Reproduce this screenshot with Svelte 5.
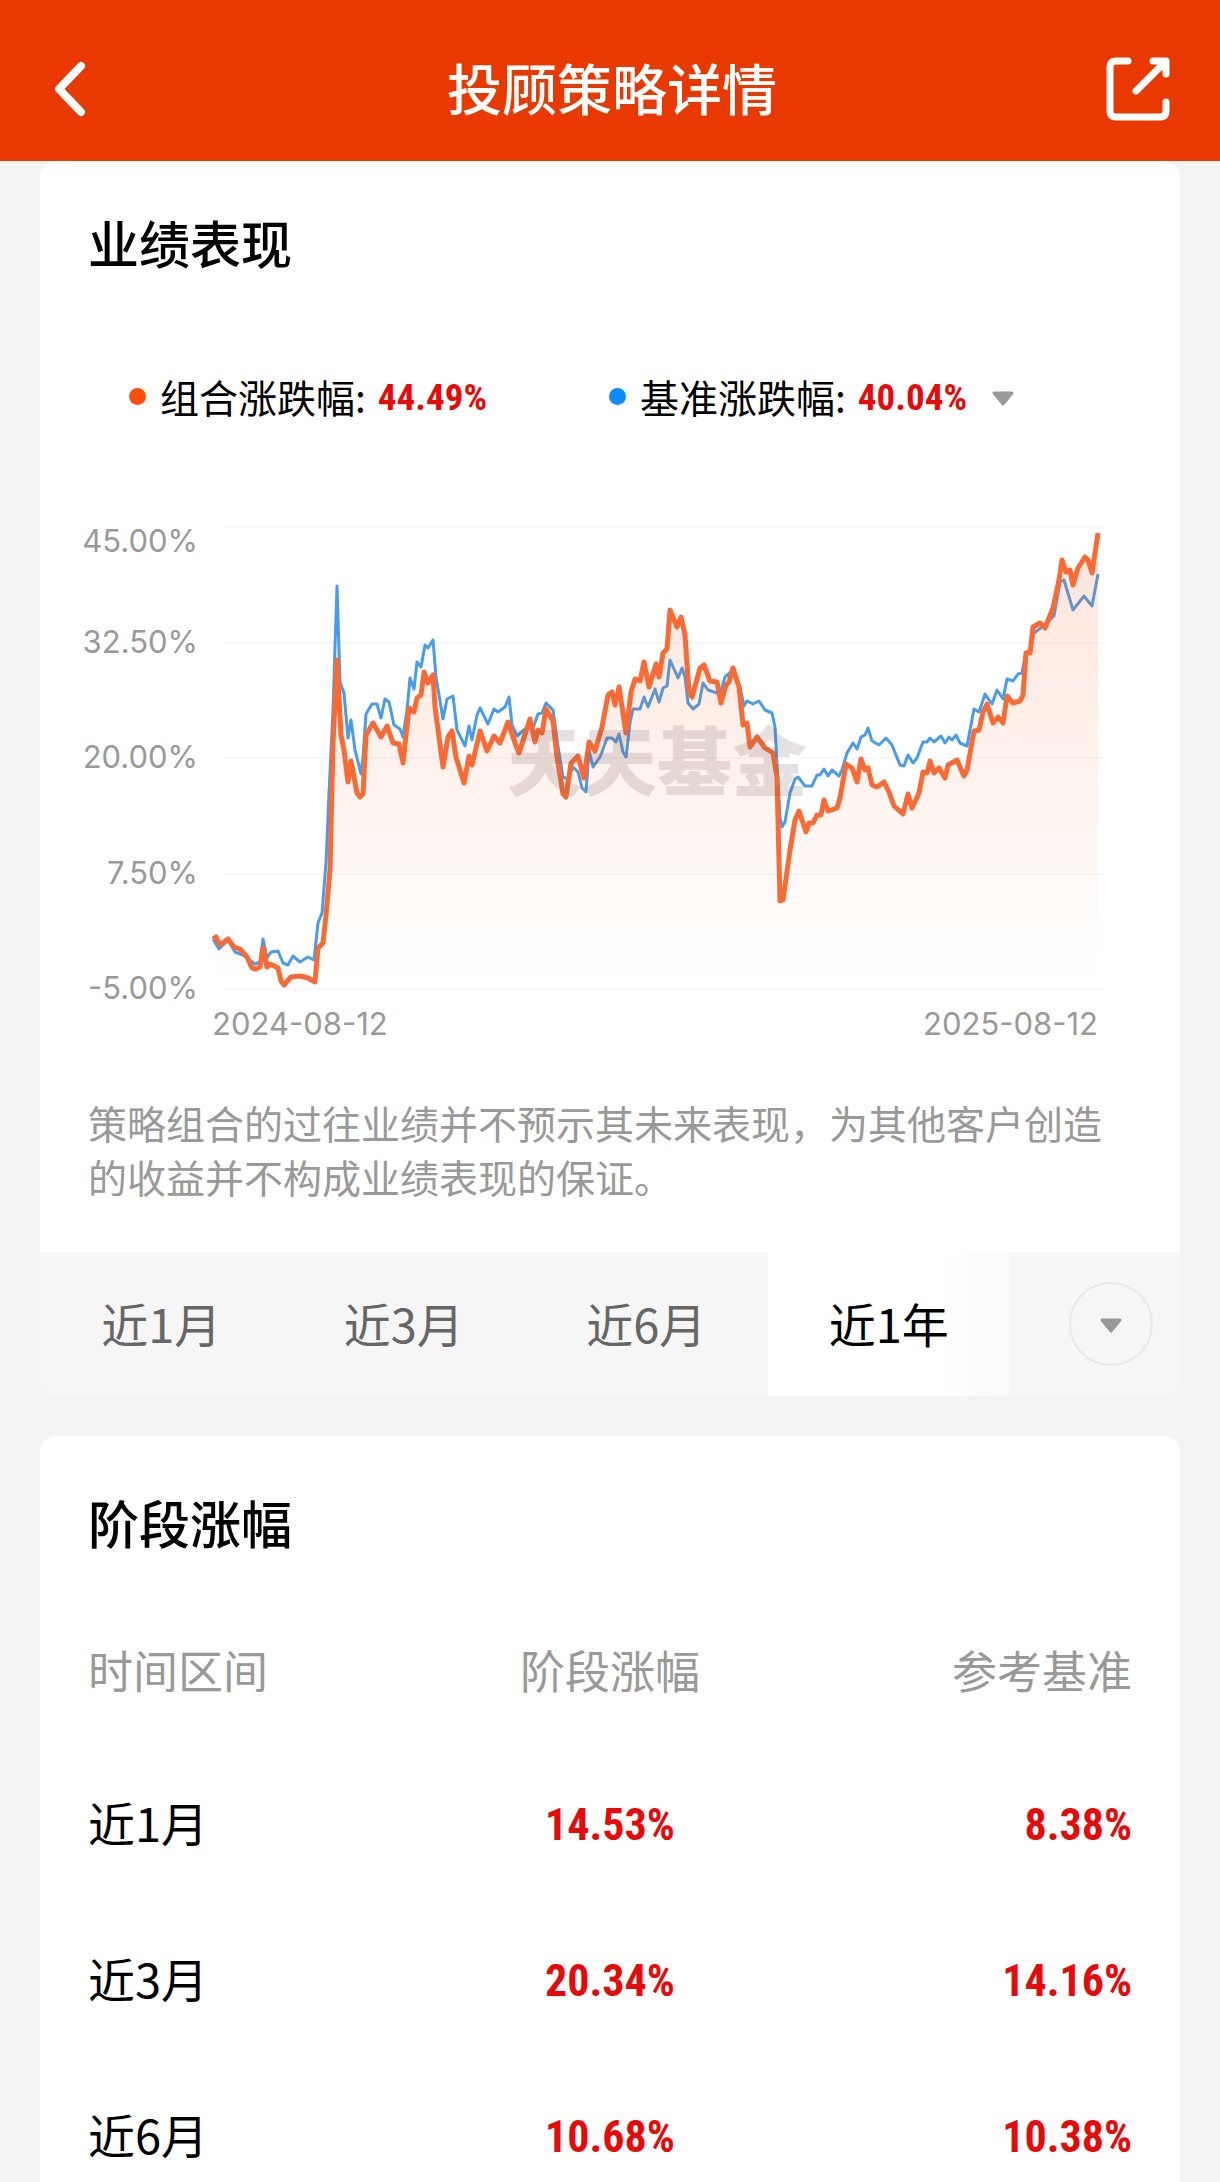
<script lang="ts">
    type Period = { label: string; gain: string; benchmark: string };

    const ticks = ["45.00%", "32.50%", "20.00%", "7.50%", "-5.00%"];
    const gridLines = [527, 643, 758, 874, 989];
    const tabs = ["近1月", "近3月", "近6月", "近1年"];
    const periods: Period[] = [
        { label: "近1月", gain: "14.53%", benchmark: "8.38%" },
        { label: "近3月", gain: "20.34%", benchmark: "14.16%" },
        { label: "近6月", gain: "10.68%", benchmark: "10.38%" },
    ];

    let activeTab = $state("近1年");

    const portfolio =
        "213,939 216,937 220,945 228,939 234,947 240,949 247,957 252,968 256,969 260,967 263,948 267,967 270,964 278,968 281,981 284,985 291,977 300,976 308,978 315,982 318,948 323,943 326,915 330,870 333,743 337,660 341,735 344,750 348,782 351,761 357,793 360,797 363,794 366,735 373,723 381,737 387,726 393,743 399,744 403,763 409,708 414,712 417,698 421,695 424,672 428,683 433,675 435,707 443,767 448,737 452,731 456,757 464,783 469,756 472,765 480,731 487,751 494,736 500,743 508,722 515,743 519,753 530,719 535,742 538,730 542,733 546,709 553,721 557,757 563,794 566,797 571,763 578,756 584,778 589,742 595,751 602,727 608,695 612,692 615,705 619,687 626,733 631,692 635,679 640,681 644,662 649,687 656,664 659,677 663,653 667,649 670,610 677,627 681,617 685,635 689,692 692,697 700,668 704,665 710,681 717,682 721,703 726,685 729,682 733,668 739,687 743,725 747,723 750,747 757,737 765,748 773,753 777,777 778,820 780,901 783,900 790,850 795,820 799,811 806,832 809,823 813,823 817,815 821,815 824,800 828,811 837,808 840,798 846,764 852,768 857,782 861,759 865,770 868,768 872,785 877,787 884,782 889,792 894,806 903,814 908,794 912,808 919,793 923,772 927,773 930,761 934,773 939,768 945,778 948,765 957,760 964,776 967,770 974,731 979,730 983,712 987,704 993,723 998,717 1003,723 1007,696 1013,703 1020,701 1023,695 1026,653 1030,653 1033,627 1040,623 1045,628 1053,608 1059,580 1062,560 1066,572 1070,570 1073,585 1078,568 1085,557 1088,560 1092,573 1098,533";
    const benchmark =
        "213,939 219,949 228,940 235,952 243,955 255,964 260,962 263,939 267,958 271,952 278,951 283,963 288,965 293,956 300,962 308,957 314,960 318,923 322,913 326,863 329,793 333,710 337,586 340,682 344,693 348,738 351,720 355,750 361,774 363,757 366,714 372,704 377,704 381,718 385,699 389,702 394,725 400,729 403,737 407,710 410,678 414,689 417,662 421,667 425,645 428,648 433,640 436,677 443,719 447,699 453,696 457,730 465,746 469,726 472,740 477,715 480,708 488,724 494,709 498,712 505,707 509,697 512,725 517,736 525,729 533,728 538,714 542,713 546,703 553,710 557,740 563,777 568,779 573,767 578,772 582,788 586,792 589,750 593,767 600,757 607,738 612,738 616,742 619,734 623,752 626,757 630,723 633,709 640,709 644,697 648,707 655,689 659,702 663,688 667,686 670,660 678,678 682,668 685,677 688,703 693,709 699,704 703,683 708,690 720,694 725,677 733,670 740,687 744,706 747,701 753,704 759,701 765,710 772,713 775,727 777,763 780,817 782,827 785,822 790,793 795,779 798,777 805,786 812,786 817,775 820,775 824,769 828,776 832,770 839,776 842,770 847,753 853,743 857,749 861,737 865,735 868,728 872,741 879,745 886,738 892,745 900,765 904,766 908,755 913,763 917,758 923,742 927,742 930,738 934,742 941,736 945,743 949,737 952,740 956,735 960,743 967,746 970,730 974,709 979,712 985,694 992,704 997,690 1003,699 1007,679 1013,681 1018,674 1022,673 1026,652 1030,652 1034,633 1042,627 1054,616 1060,582 1064,580 1073,610 1084,596 1092,606 1098,574";
</script>

<div class="page">
    <header class="topbar">
        <button class="icon-button" aria-label="返回">
            <svg width="32" height="60" viewBox="0 0 32 60">
                <path d="M27 7 L5 30 L27 53" />
            </svg>
        </button>
        <h1>投顾策略详情</h1>
        <button class="icon-button" aria-label="分享">
            <svg class="share" width="64" height="64" viewBox="0 0 64 64">
                <path d="M22 4 H10 Q4 4 4 10 V54 Q4 60 10 60 H54 Q60 60 60 54 V45" />
                <path d="M47 4 H60 V17 M59 5 L30 34" />
            </svg>
        </button>
    </header>

    <main>
        <section class="card performance">
            <h2>业绩表现</h2>
            <div class="legend">
                <div class="legend-item">
                    <span class="dot"></span>
                    <span>组合涨跌幅:</span>
                    <span class="value">44.49%</span>
                </div>
                <button class="legend-item">
                    <span class="dot blue"></span>
                    <span>基准涨跌幅:</span>
                    <span class="value">40.04%</span>
                    <svg class="caret" width="24" height="16" viewBox="0 0 24 16">
                        <path d="M3 2 H21 L12 13 Z" />
                    </svg>
                </button>
            </div>

            <div class="chart">
                <div class="ticks">
                    {#each ticks as tick}
                        <span>{tick}</span>
                    {/each}
                </div>
                <div class="plot">
                    <svg viewBox="212 520 908 475" preserveAspectRatio="none">
                        <defs>
                            <linearGradient id="area" x1="0" y1="0" x2="0" y2="1">
                                <stop offset="0" stop-color="#ff6a33" stop-opacity="0.18" />
                                <stop offset="0.6" stop-color="#ff6a33" stop-opacity="0.07" />
                                <stop offset="1" stop-color="#ff9a33" stop-opacity="0" />
                            </linearGradient>
                        </defs>
                        {#each gridLines as y}
                            <line x1="223" x2="1105" y1={y} y2={y} />
                        {/each}
                        <polyline class="benchmark" points={benchmark} />
                        <polygon fill="url(#area)" points="{portfolio} 1098,989 213,989" />
                        <polyline class="portfolio" points={portfolio} />
                    </svg>
                    <span class="watermark">天天基金</span>
                </div>
                <div class="dates">
                    <span>2024-08-12</span>
                    <span>2025-08-12</span>
                </div>
            </div>

            <p class="note">
                策略组合的过往业绩并不预示其未来表现，为其他客户创造的收益并不构成业绩表现的保证。
            </p>

            <div class="tabs">
                {#each tabs as tab}
                    <button class="tab" class:active={tab === activeTab} onclick={() => (activeTab = tab)}>
                        {tab}
                    </button>
                {/each}
                <div class="more">
                    <button aria-label="更多区间">
                        <svg class="caret" width="24" height="16" viewBox="0 0 24 16">
                            <path d="M3 2 H21 L12 13 Z" />
                        </svg>
                    </button>
                </div>
            </div>
        </section>

        <section class="card periods">
            <h2>阶段涨幅</h2>
            <table>
                <thead>
                    <tr>
                        <th>时间区间</th>
                        <th>阶段涨幅</th>
                        <th>参考基准</th>
                    </tr>
                </thead>
                <tbody>
                    {#each periods as period}
                        <tr>
                            <td>{period.label}</td>
                            <td class="value">{period.gain}</td>
                            <td class="value">{period.benchmark}</td>
                        </tr>
                    {/each}
                </tbody>
            </table>
        </section>
    </main>
</div>

<style>
    :global(body) {
        background-color: #f4f4f4;
    }

    .page {
        height: 100vh;
        overflow: hidden auto;
        scrollbar-width: none;
        font-family: "Noto Sans CJK SC", sans-serif;
        color: #000;
    }

    button {
        margin: 0;
        padding: 0;
        border: none;
        background: none;
        font: inherit;
        color: inherit;
        cursor: pointer;
    }

    h1,
    h2,
    p {
        margin: 0;
    }

    .topbar {
        display: flex;
        align-items: center;
        justify-content: space-between;
        height: 161px;
        padding: 16px 50px 0 54px;
        box-sizing: border-box;
        background-color: #ea3900;
        color: #fff;
    }

    .topbar h1 {
        padding-bottom: 6px;
        font-size: 55px;
        line-height: 80px;
        font-weight: 500;
    }

    .icon-button {
        display: flex;
        width: 64px;
    }

    .icon-button path {
        fill: none;
        stroke: #fff;
        stroke-width: 8;
        stroke-linecap: round;
        stroke-linejoin: round;
    }

    .icon-button .share path {
        stroke-width: 7;
    }

    main {
        display: flex;
        flex-direction: column;
        gap: 40px;
        padding: 0 40px;
    }

    .card {
        overflow: hidden;
        border-radius: 16px;
        background-color: #fff;
    }

    .card h2 {
        padding: 0 48px;
        font-size: 51px;
        line-height: 72px;
        font-weight: 500;
    }

    .performance {
        padding-top: 45px;
    }

    .periods {
        padding-top: 50px;
    }

    .legend {
        display: flex;
        gap: 122px;
        margin-top: 91px;
        padding-left: 89px;
        font-size: 39px;
        line-height: 54px;
    }

    .legend-item {
        display: flex;
        align-items: center;
    }

    .dot {
        width: 17px;
        height: 17px;
        margin-right: 14px;
        border-radius: 50%;
        background-color: #ff4d0a;
    }

    .dot.blue {
        background-color: #0a8cff;
    }

    .value {
        font-family: "Roboto Condensed", Roboto, sans-serif;
        font-weight: 700;
        color: #e60a0a;
    }

    .legend .value {
        margin-left: 12px;
        padding-top: 4px;
        font-size: 37px;
        line-height: 50px;
    }

    .caret {
        display: block;
        fill: #999;
        stroke: #999;
        stroke-width: 3;
        stroke-linejoin: round;
    }

    .legend .caret {
        margin: 6px 0 0 24px;
    }

    .chart {
        display: grid;
        grid-template-columns: 116px 1fr;
        column-gap: 14px;
        row-gap: 12px;
        margin-top: 97px;
        padding: 0 60px 0 42px;
        font-family: Inter, sans-serif;
        font-size: 31px;
        line-height: 34px;
        color: #999;
    }

    .ticks {
        display: grid;
        grid-template-rows: 38px 101px 115px 116px 115px;
        align-items: end;
        justify-items: end;
        height: 475px;
    }

    .plot {
        position: relative;
    }

    .plot svg {
        display: block;
        width: 100%;
        height: 475px;
    }

    .plot line {
        stroke: #f8f8f8;
        stroke-width: 2;
    }

    .plot polyline {
        fill: none;
        stroke-linejoin: round;
        vector-effect: non-scaling-stroke;
    }

    .benchmark {
        stroke: #4a9be8;
        stroke-width: 3;
    }

    .portfolio {
        stroke: #fa6a34;
        stroke-width: 5;
    }

    .watermark {
        position: absolute;
        top: 50%;
        left: 49%;
        transform: translate(-50%, -50%);
        font-family: "Noto Sans CJK SC", sans-serif;
        font-size: 75px;
        font-weight: 900;
        line-height: 80px;
        white-space: nowrap;
        color: rgba(110, 90, 90, 0.18);
    }

    .dates {
        grid-column: 2;
        display: flex;
        justify-content: space-between;
        padding-right: 22px;
    }

    .note {
        margin: 54px 48px 49px;
        font-size: 39px;
        line-height: 54px;
        color: #999;
    }

    .tabs {
        display: grid;
        grid-template-columns: repeat(4, 1fr) 170px;
        height: 144px;
        background-color: #f6f6f6;
    }

    .tab {
        padding-bottom: 4px;
        font-size: 47px;
        color: #666;
    }

    .tab.active {
        background: linear-gradient(to right, #fff 70%, #fafafa);
        color: #000;
    }

    .more {
        display: flex;
        align-items: center;
        justify-content: center;
        padding-left: 32px;
    }

    .more button {
        display: flex;
        align-items: center;
        justify-content: center;
        width: 84px;
        height: 84px;
        padding-top: 4px;
        border: 2px solid #e8e8e8;
        border-radius: 50%;
        box-sizing: border-box;
    }

    .periods table {
        width: 100%;
        margin-top: 37px;
        border-collapse: collapse;
        table-layout: fixed;
    }

    .periods th {
        height: 149px;
        padding: 0;
        font-size: 45px;
        font-weight: 400;
        color: #999;
    }

    .periods td {
        height: 156px;
        padding: 0;
        font-size: 47px;
        line-height: 68px;
        text-align: center;
    }

    .periods td.value {
        padding-top: 6px;
        height: 150px;
        font-size: 44px;
    }

    .periods th:first-child,
    .periods td:first-child {
        padding-left: 48px;
        text-align: left;
    }

    .periods th:last-child,
    .periods td:last-child {
        padding-right: 48px;
        text-align: right;
    }
</style>
